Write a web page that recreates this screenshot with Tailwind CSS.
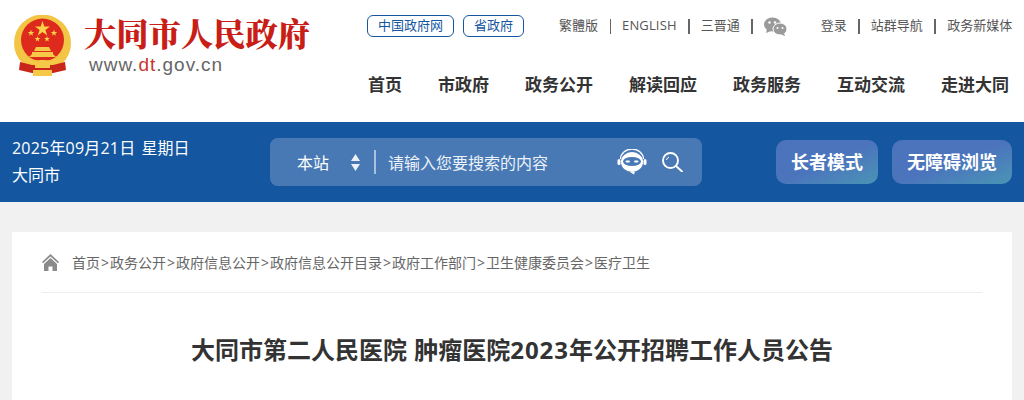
<!DOCTYPE html>
<html lang="zh-CN"><head><meta charset="utf-8">
<script src="https://cdn.jsdelivr.net/npm/@tailwindcss/browser@4"></script>
</head>
<body class="h-[400px] overflow-hidden bg-[#f1f1f1] font-['Open_Sans','Noto_Sans_CJK_SC',sans-serif]">
<header class="h-[122px] bg-white flex justify-between pl-3 pr-3">
  <div class="w-[310px] pt-3 flex gap-[13px]">
    <svg class="ml-[2px] w-[57px] h-[62px] mt-[3px] shrink-0" viewBox="0 0 57 62">
      <circle cx="28.500" cy="28" r="28.500" fill="#f3c544"/>
      <circle cx="28.500" cy="25" r="21.500" fill="#dd2a1c"/>
      <polygon points="28.500,6 30.300,11.500 36,11.500 31.400,14.900 33.200,20.500 28.500,17 23.800,20.500 25.600,14.900 21,11.500 26.700,11.500" fill="#f8d24a"/>
      <polygon points="17,14.500 17.800,16.900 20.300,16.900 18.300,18.400 19,20.800 17,19.300 15,20.800 15.700,18.400 13.700,16.900 16.200,16.900" fill="#f8d24a"/>
      <polygon points="40,14.500 40.800,16.900 43.300,16.900 41.300,18.400 42,20.800 40,19.300 38,20.800 38.700,18.400 36.700,16.900 39.200,16.900" fill="#f8d24a"/>
      <polygon points="23.500,21 24.200,23.100 26.400,23.100 24.600,24.400 25.300,26.500 23.500,25.200 21.700,26.500 22.400,24.400 20.600,23.100 22.800,23.100" fill="#f8d24a"/>
      <polygon points="33,21 33.700,23.100 35.900,23.100 34.100,24.400 34.800,26.500 33,25.200 31.200,26.500 31.900,24.400 30.100,23.100 32.300,23.100" fill="#f8d24a"/>
      <path d="M22 32h13l2 4H20zM18 37h21v2l3 3H15l3-3z" fill="#f5c848"/>
      <path d="M6 47l-1 8 13 3h21l13-3-1-8-12 3H18z" fill="#c8261b"/>
      <path d="M9 42c6 5 14 3 19.500 3S42 47 48 42l-1 4c-6 4-12 3-18.500 3S15 50 10 46zM21 49h15v4H21zM19 55h19v6H19z" fill="#f5c848"/>
    </svg>
    <div>
      <div class="text-[32.300px] leading-[40px] font-black text-[#c81e17] whitespace-nowrap font-['Noto_Serif_CJK_SC','Noto_Sans_CJK_SC',serif]">大同市人民政府</div>
      <div class="mt-[1px] ml-[5px] text-[19px] leading-[24px] tracking-[1px] text-[#666] font-['Liberation_Sans',sans-serif]">www.<span class="text-[#c9352c]">dt</span>.gov.cn</div>
    </div>
  </div>
  <div class="w-[645px] shrink-0">
    <div class="flex items-center h-[22px] mt-[15px] text-[13px] text-[#555] whitespace-nowrap">
      <a class="w-[87px] h-[22px] shrink-0 flex items-center justify-center rounded-[6px] border border-[#14569f] text-[#14569f]">中国政府网</a>
      <a class="ml-[9px] w-[61px] h-[22px] shrink-0 flex items-center justify-center rounded-[6px] border border-[#14569f] text-[#14569f]">省政府</a>
      <span class="ml-[35px] shrink-0">繁體版</span><i class="w-[1.500px] shrink-0 h-[15px] bg-[#666] ml-[11.500px] mr-[11px]"></i>
      <span class="shrink-0 text-[13px] tracking-[0.15px]">ENGLISH</span><i class="w-[1.500px] shrink-0 h-[15px] bg-[#666] ml-[11.500px] mr-[11px]"></i>
      <span class="shrink-0">三晋通</span><i class="w-[1.500px] shrink-0 h-[15px] bg-[#666] ml-[11.500px] mr-[11px]"></i>
      <svg class="w-[23px] h-[19px] shrink-0" viewBox="0 0 23 19" fill="#9a9a9a">
        <ellipse cx="8.500" cy="7.500" rx="8.500" ry="7"/><path d="M3 12l-1 4 5-2z"/>
        <ellipse cx="16" cy="12" rx="7" ry="6" stroke="#fff" stroke-width="1"/><path d="M20 16l1 3-4-1.500z"/>
        <circle cx="5.500" cy="5.500" r="1.200" fill="#fff"/><circle cx="11" cy="5.500" r="1.200" fill="#fff"/>
        <circle cx="13.500" cy="11" r="1" fill="#fff"/><circle cx="18.500" cy="11" r="1" fill="#fff"/>
      </svg>
      <span class="ml-[34px] shrink-0">登录</span><i class="w-[1.500px] shrink-0 h-[15px] bg-[#666] ml-[11.500px] mr-[11px]"></i>
      <span class="shrink-0">站群导航</span><i class="w-[1.500px] shrink-0 h-[15px] bg-[#666] ml-[11.500px] mr-[11.500px]"></i>
      <span class="shrink-0">政务新媒体</span>
    </div>
    <nav class="flex gap-[36px] ml-px mt-[35px] text-[17px] leading-[26px] font-bold text-[#333] whitespace-nowrap">
      <a>首页</a><a>市政府</a><a>政务公开</a><a>解读回应</a><a>政务服务</a><a>互动交流</a><a>走进大同</a>
    </nav>
  </div>
</header>
<section class="h-[80px] bg-[#14569f] flex items-center px-3 text-white">
  <div class="w-[258px] text-[16px] leading-[27px] whitespace-nowrap">
    <div class="flex"><span class="tracking-[0.2px]">2025年09月21日</span><span class="ml-[6px]">星期日</span></div>
    <div>大同市</div>
  </div>
  <div class="w-[432px] h-[48px] rounded-[8px] bg-[#4879b5] flex items-center">
    <span class="ml-[27px] w-[54px] text-[16px] pt-[1px]">本站</span>
    <svg class="w-[9px] h-[17px]" viewBox="0 0 9 17" fill="#fff" opacity=".9"><path d="M4.500 0L9 7H0zM4.500 17L9 10H0z"/></svg>
    <i class="ml-[14px] w-[2px] h-[24px] bg-[#a9c1de]"></i>
    <span class="ml-[12px] pt-[2px] text-[16px] text-white/90 w-[229px]">请输入您要搜索的内容</span>
    <svg class="w-[30px] h-[26px]" viewBox="0 0 30 26" fill="none">
      <path d="M3.500 10a11.500 10 0 0 1 23 0" stroke="#fff" stroke-width="1.300"/>
      <ellipse cx="15" cy="13" rx="11" ry="10" fill="#fff"/>
      <ellipse cx="15" cy="12.500" rx="9" ry="4.500" fill="#4879b5"/>
      <path d="M9.500 12.500h2.500M18 12.500h2.500" stroke="#fff" stroke-width="1.800" stroke-linecap="round"/>
      <rect x="0.500" y="10" width="3" height="6" rx="1.500" fill="#fff"/><rect x="26.500" y="10" width="3" height="6" rx="1.500" fill="#fff"/>
      <path d="M13 23l4 2.500 1-3z" fill="#fff"/>
    </svg>
    <svg class="ml-[15px] w-[21px] h-[20px]" viewBox="0 0 21 20" fill="none" stroke="#fff" stroke-width="1.900"><circle cx="8.500" cy="8.500" r="7.500"/><path d="M14 14l6 5.500" stroke-linecap="round"/><path d="M4.500 8a4 4 0 0 1 2.500-3" stroke-width="1"/></svg>
  </div>
  <div class="ml-auto flex gap-[14px] text-[18px] font-bold whitespace-nowrap">
    <a class="w-[102px] h-[44px] pt-[1px] rounded-[10px] flex items-center justify-center bg-linear-to-br from-[#4b74bd] via-[#4b74bd] to-[#4a94b5]">长者模式</a>
    <a class="w-[120px] h-[44px] pt-[1px] rounded-[10px] flex items-center justify-center bg-linear-to-br from-[#4b74bd] via-[#4b74bd] to-[#4a94b5]">无障碍浏览</a>
  </div>
</section>
<main class="mt-[30px] mx-3 bg-white px-[30px] h-[168px]">
  <div class="h-[61px] border-b border-[#eee] flex items-center gap-[13px] text-[14px] text-[#666]">
    <svg class="w-[17px] h-[17px]" viewBox="0 0 17 17" fill="#8a8a8a"><path d="M8.500 0L17 8l-1 1.200L8.500 2.500 1 9.200 0 8z"/><path d="M8.500 4L15 10v7h-4.500v-4.500h-4V17H2v-7z"/></svg>
    <span class="whitespace-nowrap">首页<span class="mx-px">&gt;</span>政务公开<span class="mx-px">&gt;</span>政府信息公开<span class="mx-px">&gt;</span>政府信息公开目录<span class="mx-px">&gt;</span>政府工作部门<span class="mx-px">&gt;</span>卫生健康委员会<span class="mx-px">&gt;</span>医疗卫生</span>
  </div>
  <h1 class="mt-[39px] text-center text-[24px] leading-[36px] font-bold text-[#333] whitespace-nowrap">大同市第二人民医院<span class="tracking-[1px]"> </span>肿瘤医院<span class="tracking-[1px]">2023</span>年公开招聘工作人员公告</h1>
</main>
</body></html>
